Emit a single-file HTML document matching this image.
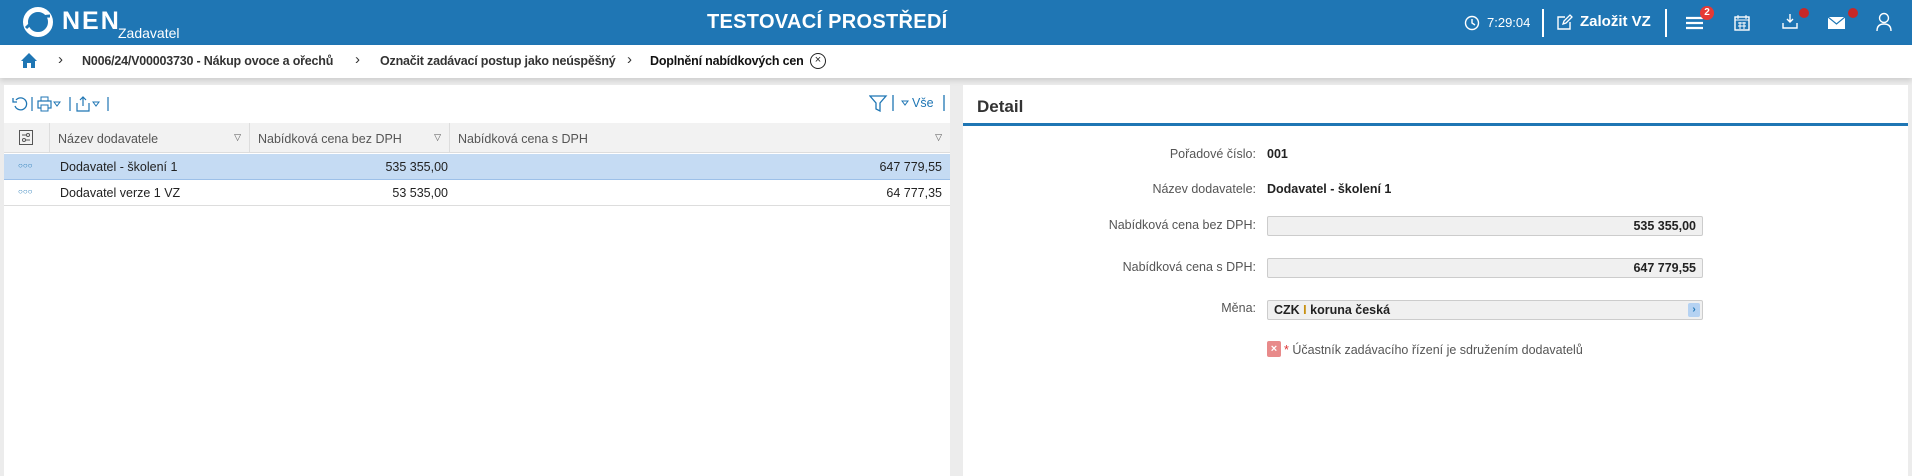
<!DOCTYPE html>
<html><head><meta charset="utf-8"><style>
*{box-sizing:border-box;margin:0;padding:0}
body{width:1912px;height:476px;overflow:hidden;background:#ececec;font-family:"Liberation Sans",sans-serif;font-size:13px;color:#222;position:relative}
.abs{position:absolute}
#hdr{left:0;top:0;width:1912px;height:45px;background:#1f76b4;color:#fff}
#bc{left:0;top:45px;width:1912px;height:33px;background:#fff;box-shadow:0 3px 5px rgba(0,0,0,.12)}
#bc span{position:absolute;top:9px;font-size:12.5px;color:#333;font-weight:bold;letter-spacing:-.2px}
.chev{color:#777;font-weight:normal!important;font-size:15px!important;top:6px!important}
#left{left:4px;top:85px;width:946px;height:391px;background:#fff}
#right{left:963px;top:85px;width:945px;height:391px;background:#fff}
.th{position:absolute;top:38px;height:30px;background:#f2f2f2;border-right:1px solid #ddd;border-bottom:1px solid #ddd;color:#555;padding:9px 8px;font-size:12.5px}
.tri{position:absolute;right:8px;top:9px;font-size:9px;color:#555}
.row{position:absolute;left:0;width:946px;height:26px;border-bottom:1px solid #ddd}
.row div{position:absolute;top:6px;font-size:12.5px}
.lbl{position:absolute;right:652px;color:#555;font-size:12.5px;text-align:right}
.val{position:absolute;left:304px;font-weight:bold;font-size:12.5px}
.box{position:absolute;left:304px;width:436px;height:20px;background:#f0f0f0;border:1px solid #ccc;border-radius:2px;font-weight:bold;font-size:12.5px;padding:2px 6px;text-align:right}
.dots{position:absolute;left:14px;top:7px;color:#1f76b4;font-size:8px;letter-spacing:0}
</style></head><body>
<div id="hdr" class="abs">
 <svg class="abs" style="left:22px;top:6px" width="32" height="32" viewBox="0 0 32 32"><circle cx="16" cy="16" r="12.5" fill="none" stroke="#fff" stroke-width="5"/><path d="M4 22 Q16 10 28 10" stroke="#1f76b4" stroke-width="3" fill="none"/></svg>
 <div class="abs" style="left:62px;top:7px;font-size:25px;font-weight:bold;letter-spacing:2px">NEN</div>
 <div class="abs" style="left:118px;top:25px;font-size:14px">Zadavatel</div>
 <div class="abs" style="left:707px;top:11px;font-size:20px;font-weight:bold;letter-spacing:.3px">TESTOVACÍ PROSTŘEDÍ</div>
 <svg class="abs" style="left:1464px;top:15px" width="16" height="16" viewBox="0 0 16 16"><circle cx="8" cy="8" r="6.5" fill="none" stroke="#fff" stroke-width="1.4"/><path d="M8 4v4l3 2" stroke="#fff" stroke-width="1.4" fill="none"/></svg>
 <div class="abs" style="left:1487px;top:15px;font-size:13px">7:29:04</div>
 <div class="abs" style="left:1542px;top:9px;width:2px;height:28px;background:#fff"></div>
 <svg class="abs" style="left:1556px;top:14px" width="17" height="17" viewBox="0 0 17 17"><path d="M9 3H2v12h12V8" stroke="#fff" stroke-width="1.4" fill="none"/><path d="M7 10l1-3 6-6 2 2-6 6z" stroke="#fff" stroke-width="1.3" fill="none"/></svg>
 <div class="abs" style="left:1580px;top:13px;font-size:15px;font-weight:bold">Založit VZ</div>
 <div class="abs" style="left:1665px;top:9px;width:2px;height:28px;background:#fff"></div>
 <svg class="abs" style="left:1686px;top:16px" width="17" height="14" viewBox="0 0 17 14"><path d="M0 2h17M0 7h17M0 12h17" stroke="#fff" stroke-width="2.2"/></svg>
 <div class="abs" style="left:1700px;top:6px;width:14px;height:14px;border-radius:7px;background:#e53935;font-size:10px;font-weight:bold;text-align:center;line-height:14px">2</div>
 <svg class="abs" style="left:1734px;top:14px" width="16" height="17" viewBox="0 0 16 17"><rect x="1" y="3" width="14" height="13" fill="none" stroke="#fff" stroke-width="1.4"/><path d="M1 6h14M4 1v4M12 1v4M4 9h8M4 12h8M6 8v7M10 8v7" stroke="#fff" stroke-width="1"/></svg>
 <svg class="abs" style="left:1782px;top:13px" width="16" height="17" viewBox="0 0 16 17"><path d="M8 1v8M5 6l3 3 3-3M1 10v5h14v-5" stroke="#fff" stroke-width="1.4" fill="none"/></svg>
 <div class="abs" style="left:1799px;top:8px;width:10px;height:10px;border-radius:5px;background:#c62828"></div>
 <svg class="abs" style="left:1828px;top:17px" width="17" height="12" viewBox="0 0 17 12"><rect width="17" height="12" fill="#fff"/><path d="M0 0l8.5 7L17 0" stroke="#1f76b4" stroke-width="1.2" fill="none"/></svg>
 <div class="abs" style="left:1848px;top:8px;width:10px;height:10px;border-radius:5px;background:#c62828"></div>
 <svg class="abs" style="left:1876px;top:12px" width="16" height="20" viewBox="0 0 16 20"><circle cx="8" cy="6" r="4.5" fill="none" stroke="#fff" stroke-width="1.4"/><path d="M1 19q0-7 7-7t7 7" stroke="#fff" stroke-width="1.4" fill="none"/></svg>
</div>
<div id="bc" class="abs">
 <svg class="abs" style="left:20px;top:7px" width="18" height="17" viewBox="0 0 18 17"><path d="M9 1L1 9h2v7h4v-5h4v5h4V9h2z" fill="#1f76b4"/></svg>
 <span class="chev" style="left:58px">›</span>
 <span style="left:82px">N006/24/V00003730 - Nákup ovoce a ořechů</span>
 <span class="chev" style="left:355px">›</span>
 <span style="left:380px">Označit zadávací postup jako neúspěšný</span>
 <span class="chev" style="left:627px">›</span>
 <span style="left:650px;color:#111">Doplnění nabídkových cen</span>
 <div class="abs" style="left:810px;top:8px;width:16px;height:16px;border:1.3px solid #222;border-radius:8px;font-size:11px;text-align:center;line-height:13px">×</div>
</div>
<div id="left" class="abs">
 <svg class="abs" style="left:8px;top:11px" width="110" height="16" viewBox="0 0 110 16"><path d="M4 4a6 6 0 1 1-1 6" stroke="#1f76b4" stroke-width="1.3" fill="none"/><path d="M1 2v4h4" stroke="#1f76b4" stroke-width="1.3" fill="none"/><path d="M20 1v14M58 1v14M96 1v14" stroke="#1f76b4" stroke-width="1.2"/><rect x="26" y="5" width="13" height="7" fill="none" stroke="#1f76b4" stroke-width="1.2"/><rect x="29" y="1" width="7" height="4" fill="none" stroke="#1f76b4"/><rect x="29" y="9" width="7" height="6" fill="#fff" stroke="#1f76b4"/><path d="M42 6l3 4 3-4z" fill="none" stroke="#1f76b4"/><path d="M65 7v8h12V7M71 1v9M68 4l3-3 3 3" stroke="#1f76b4" stroke-width="1.2" fill="none"/><path d="M81 6l3 4 3-4z" fill="none" stroke="#1f76b4"/></svg>
 <svg class="abs" style="left:865px;top:9px" width="80" height="18" viewBox="0 0 80 18"><path d="M1 2h16l-6 7v8l-4-2V9z" stroke="#1f76b4" stroke-width="1.3" fill="none"/><path d="M24 1v16M75 1v16" stroke="#1f76b4" stroke-width="1.3"/><path d="M33 7l3 4 3-4z" fill="none" stroke="#1f76b4"/><text x="43" y="13" font-size="12.5" fill="#1f76b4" font-family="Liberation Sans">Vše</text></svg>
 <div class="th" style="left:0;width:46px"><svg width="14" height="15" viewBox="0 0 14 15" style="position:absolute;left:15px;top:7px"><rect x=".5" y=".5" width="13" height="14" fill="none" stroke="#555"/><path d="M3 5h8M3 10h8" stroke="#555"/><circle cx="9" cy="5" r="1.5" fill="#fff" stroke="#555"/><circle cx="5" cy="10" r="1.5" fill="#fff" stroke="#555"/></svg></div>
 <div class="th" style="left:46px;width:200px">Název dodavatele<span class="tri">▽</span></div>
 <div class="th" style="left:246px;width:200px">Nabídková cena bez DPH<span class="tri">▽</span></div>
 <div class="th" style="left:446px;width:500px;border-right:none">Nabídková cena s DPH<span class="tri">▽</span></div>
 <div class="row" style="top:69px;background:#c5dbf3;border-bottom:1px solid #9dc0e8"><span class="dots">○○○</span><div style="left:56px">Dodavatel - školení 1</div><div style="right:502px">535 355,00</div><div style="right:8px">647 779,55</div></div>
 <div class="row" style="top:95px"><span class="dots">○○○</span><div style="left:56px">Dodavatel verze 1 VZ</div><div style="right:502px">53 535,00</div><div style="right:8px">64 777,35</div></div>
</div>
<div id="right" class="abs">
 <div class="abs" style="left:14px;top:12px;font-size:17px;font-weight:bold;color:#333">Detail</div>
 <div class="abs" style="left:0;top:38px;width:945px;height:3px;background:#1f76b4"></div>
 <div class="lbl" style="top:62px">Pořadové číslo:</div><div class="val" style="top:62px">001</div>
 <div class="lbl" style="top:97px">Název dodavatele:</div><div class="val" style="top:97px">Dodavatel - školení 1</div>
 <div class="lbl" style="top:133px">Nabídková cena bez DPH:</div><div class="box" style="top:131px">535 355,00</div>
 <div class="lbl" style="top:175px">Nabídková cena s DPH:</div><div class="box" style="top:173px">647 779,55</div>
 <div class="lbl" style="top:216px">Měna:</div><div class="box" style="top:215px;text-align:left">CZK <span style="color:#c89010">I</span> koruna česká<span style="position:absolute;right:2px;top:2px;width:12px;height:14px;background:#b5d2f2;border-radius:2px;color:#1f76b4;font-size:10px;text-align:center;line-height:14px">›</span></div>
 <div class="abs" style="left:304px;top:256px;width:14px;height:16px;background:#e88a8a;border-radius:2px;color:#fff;font-size:11px;font-weight:bold;text-align:center;line-height:16px">×</div>
 <div class="abs" style="left:321px;top:258px;color:#555;font-size:12.5px"><span style="color:#d33">*</span> Účastník zadávacího řízení je sdružením dodavatelů</div>
</div>
</body></html>
